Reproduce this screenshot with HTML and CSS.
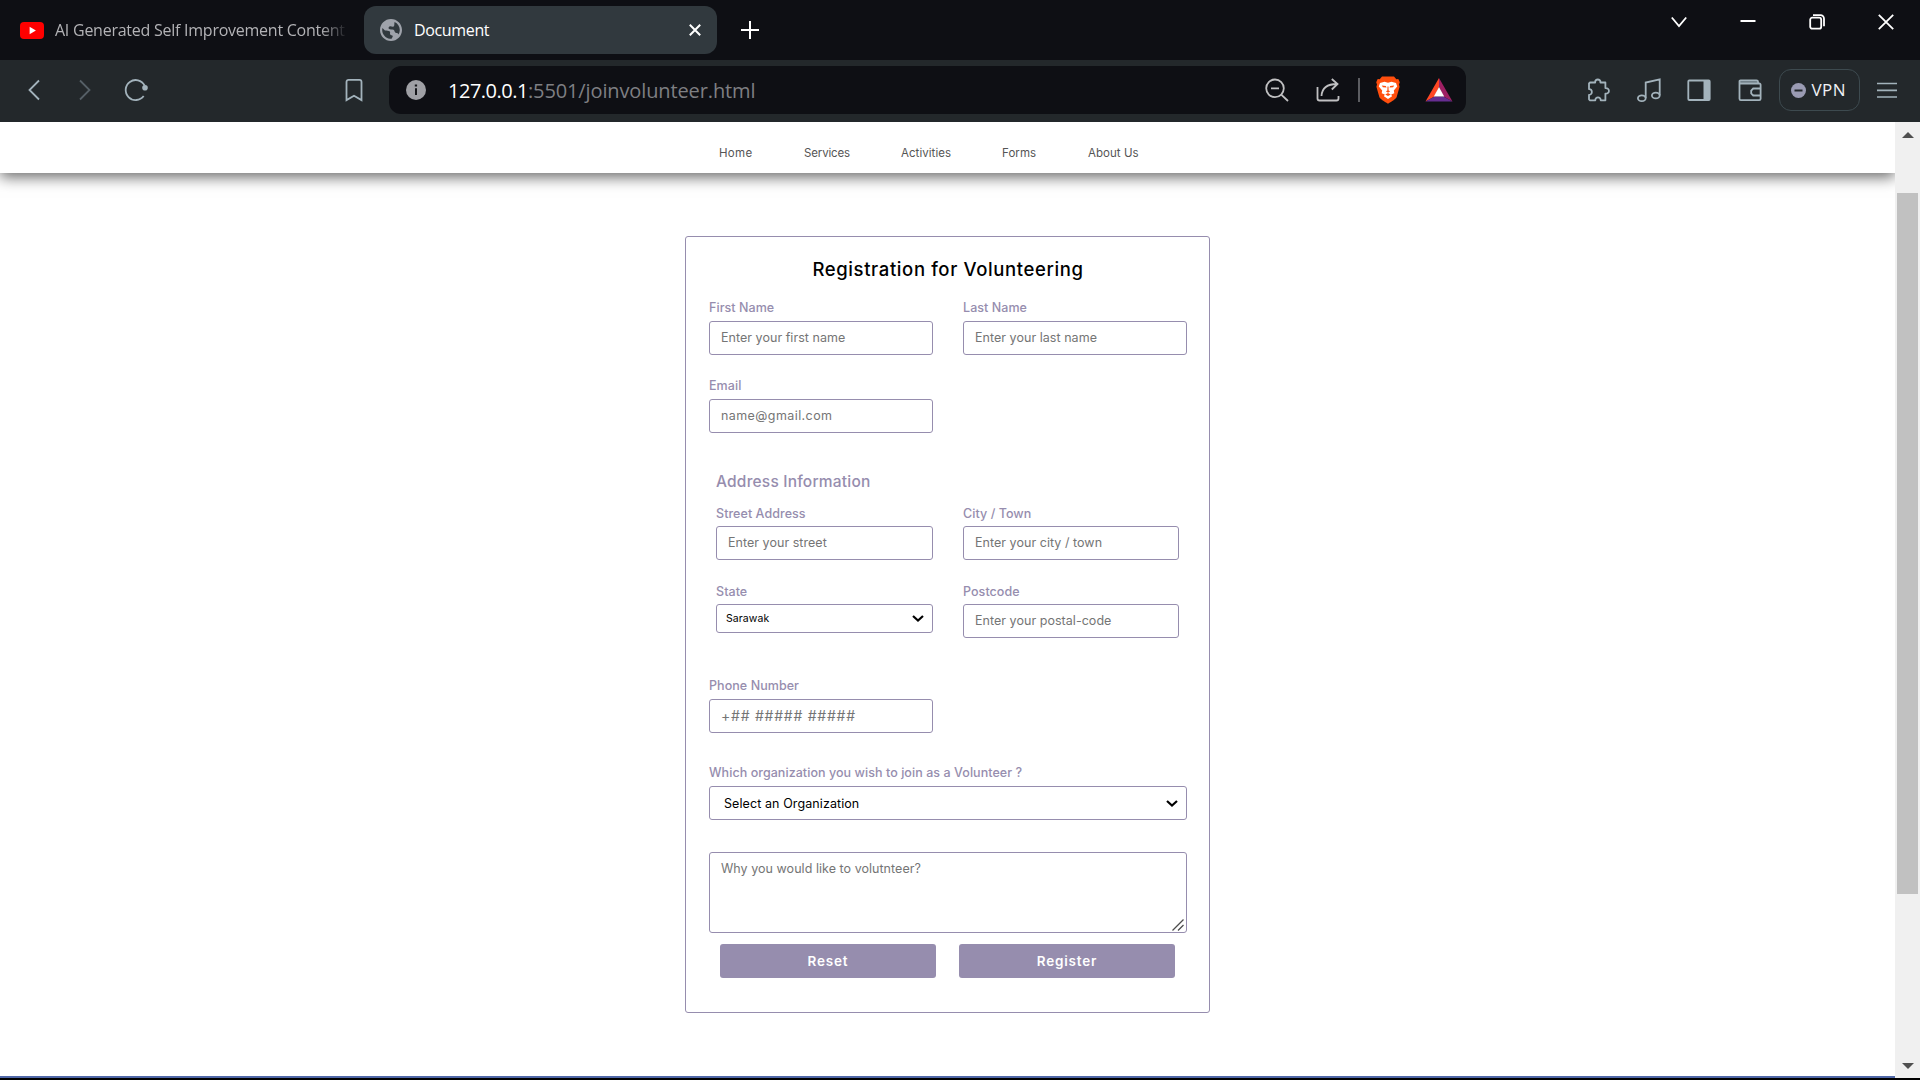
FILE: index.html
```html
<!DOCTYPE html>
<html lang="en">
<head>
<meta charset="utf-8">
<title>Document</title>
<link rel="stylesheet" href="styles.css">
</head>
<body>
<div class="tabbar">
  <div class="tab">
    <svg class="yt" width="24" height="17" viewBox="0 0 24 17"><rect width="24" height="17" rx="4" fill="#f00"/><path d="M9.6 4.8v7.4l6.3-3.7z" fill="#fff"/></svg>
    <span class="tab-title tab-title-fade">AI Generated Self Improvement Content</span>
  </div>
  <div class="tab tab-active">
    <svg class="globe" width="22" height="22" viewBox="2 2 20 20" fill="#9fa3ab"><path d="M12 2C6.480 2 2 6.480 2 12s4.480 10 10 10 10-4.480 10-10S17.520 2 12 2zm-1 17.930c-3.950-.490-7-3.850-7-7.930 0-.620.080-1.210.210-1.790L6.500 12.500c1.500.400 3.300-.200 4.500.900.700.800-.400 1.600.300 2.600.500.700 1.700.500 2.200 1.300.400.900-.500 1.600-.900 2.630zM18.900 16c-.400-.900-1.200-1.300-2.200-1.300-1.500-.100-1.200-2.100-2.400-2.900-1.300-.800-3.300.100-4.300-1-.700-.900.200-2 1.200-2.200 1.200-.200 2.100.900 3.200.200.900-.700.500-1.900.700-2.900l.100-1.200C18.100 6 20 8.800 20 12c0 1.500-.400 2.800-1.100 4z"/></svg>
    <span class="tab-title">Document</span>
    <svg class="tab-close" width="12" height="12" viewBox="0 0 12 12" fill="none" stroke="#fff" stroke-width="2"><path d="M.8.800l10.400 10.400M11.200.800.800 11.200"/></svg>
  </div>
  <svg class="newtab" width="18" height="18" viewBox="0 0 18 18" stroke="#fff" stroke-width="2"><path d="M9 0v18M0 9h18"/></svg>
  <div class="window-controls">
    <svg width="16" height="16" viewBox="0 0 16 16" fill="none" stroke="#fff" stroke-width="1.800"><path d="M.8 3.500 8 12l7.200-8.500"/></svg>
    <svg width="16" height="16" viewBox="0 0 16 16" stroke="#fff" stroke-width="2"><path d="M.5 7h15"/></svg>
    <svg width="16" height="16" viewBox="0 0 16 16" fill="none" stroke="#fff" stroke-width="1.800"><rect x="1.200" y="3.700" width="11" height="11" rx="2"/><path d="M4 1.200h7.500a3.500 3.500 0 0 1 3.500 3.500v7.600"/></svg>
    <svg width="16" height="16" viewBox="0 0 16 16" stroke="#fff" stroke-width="1.800"><path d="m.8.800 14.400 14.400M15.200.800.800 15.200"/></svg>
  </div>
</div>

<div class="toolbar">
  <div class="nav-icons">
    <svg class="ico" viewBox="0 0 24 24"><path d="M17 2.500 7.500 12l9.500 9.500" /></svg>
    <svg class="ico ico-dim" viewBox="0 0 24 24"><path d="m7 2.500 9.500 9.500L7 21.500"/></svg>
    <svg class="ico" viewBox="0 0 24 24"><path d="M19.700 18A10 10 0 1 1 20.600 7.500"/><circle cx="21" cy="9.700" r="2.800" fill="#a3b3bc" stroke="none"/></svg>
  </div>
  <svg class="ico ico-bookmark" viewBox="0 0 24 24"><path d="M6.500 1.900h11a2 2 0 0 1 2 2v18.200L12 17.800l-7.500 4.300V3.900a2 2 0 0 1 2-2z"/></svg>
  <div class="urlbar">
    <svg class="info" width="20" height="20" viewBox="0 0 20 20"><circle cx="10" cy="10" r="10" fill="#9fa0a5"/><path d="M8.500 8.300h2.500V15H9V8.300M8.800 4.600h2.300v2H8.800z" fill="#15161a"/></svg>
    <span class="url"><b class="host">127.0.0.1</b>:5501/joinvolunteer.html</span>
    <svg class="ico ico-gray ico-zoom" viewBox="0 0 24 24"><circle cx="10" cy="10.300" r="8.800"/><path d="m16.500 16.800 6.500 6.200M6 10.300h8"/></svg>
    <svg class="ico ico-gray" viewBox="0 0 24 24"><path d="M1.500 9v11.500a2 2 0 0 0 2 2h17a2 2 0 0 0 2-2V18M5.500 18C6 10 11 6 21 6M15.800 1 21.500 6l-5.700 5.500"/></svg>
    <span class="divider"></span>
    <svg class="brave" width="24" height="28" viewBox="0 0 24 28"><path d="M6 .5h12l2.300 2.700 2-.2 1.500 3.300-.8 2.200.6 2.300-3 10.500c-.500 1.500-4.600 4.200-8.600 6.400C8 25.500 3.900 22.800 3.400 21.300L.4 10.800 1 8.500.2 6.300 1.700 3l2 .2z" fill="#ff4e0d"/><path d="M4 7 8.500 5.800 12 6.700l3.500-.9L20 7l1.200 3.500-3.400 4 .5 2.700-3.100 1.300.9 1.700L12 23l-4.100-2.800.9-1.700-3.100-1.300.5-2.700-3.400-4z" fill="#fff"/><path d="m5.800 9.600 4 .5.700 1.500-3.600-.4zM18.200 9.600l-4 .5-.7 1.500 3.600-.4zM11.500 10.500h1l.1 4 1.600.8-2.200 1.400-2.200-1.400 1.600-.8zM9.200 18.400l2.800-1.300 2.800 1.300-2.800 1.700z" fill="#ff4e0d"/></svg>
    <svg class="bat" width="28" height="24" viewBox="0 0 28 24"><path d="M14 0 .5 23.500l9-5L14 9z" fill="#ff4724"/><path d="m14 0 13.500 23.500-9-5L14 9z" fill="#9e1f63"/><path d="M.5 23.500h27l-9-5h-9z" fill="#662d91"/><path d="m14 9 5.200 9.500H8.800z" fill="#fff"/></svg>
  </div>
  <div class="ext-icons">
    <svg class="ico" viewBox="0 0 24 24"><path d="M3 4.500h5.200c-.600-4 5.800-4 5.200 0h5v5.600c4.700-.400 4.700 6 0 5.600v6.600h-4.700c.2-4-5.600-4-5.400 0H3l-1-1v-4.500c3.700.300 3.900-6 0-5.700V5.500z" stroke-linejoin="round"/></svg>
    <svg class="ico" viewBox="0 0 24 24"><ellipse cx="4.800" cy="20.200" rx="3.900" ry="2.900"/><ellipse cx="18.800" cy="17.500" rx="3.900" ry="2.900"/><path d="M8.700 20V4.500l14-3.200v16"/></svg>
    <svg class="ico" viewBox="0 0 24 24"><rect x="1.300" y="2.500" width="21.400" height="19.500" rx="1"/><path d="M16.500 2.500H23V22h-6.500z" fill="#a3b3bc" stroke="none"/></svg>
    <svg class="ico" viewBox="0 0 24 24"><path d="M2 3h17v2.500H2z" fill="#65737b" stroke="none"/><path d="M1.500 5.500V3.300a1 1 0 0 1 1-1H18.500a1.500 1.500 0 0 1 1.500 1.500v1.700M1.500 5.500h19.800a1.300 1.300 0 0 1 1.300 1.300v14a1.300 1.300 0 0 1-1.300 1.300H2.800a1.300 1.300 0 0 1-1.300-1.300zM22.500 10.500h-7.300l-2 2v3l2 2h7.300"/></svg>
  </div>
  <div class="vpn"><svg width="15" height="15" viewBox="0 0 15 15"><circle cx="7.500" cy="7.500" r="7.500" fill="#9a9bb3"/><path d="M3.500 7.500h8" stroke="#22272b" stroke-width="2"/></svg><span class="vpn-label">VPN</span></div>
  <svg class="menu" width="20" height="16" viewBox="0 0 20 16" stroke="#a3b3bc" stroke-width="1.700"><path d="M0 1.500h20M0 8.300h20M0 15h20"/></svg>
</div>

<div class="viewport">
  <div class="page">
    <header class="site-header">
      <nav class="site-nav"><a class="n1">Home</a><a class="n2">Services</a><a>Activities</a><a>Forms</a><a>About Us</a></nav>
    </header>
    <form class="card">
      <h1 class="title">Registration for Volunteering</h1>
      <div class="grid">
        <div class="field"><label>First Name</label><input placeholder="Enter your first name"></div>
        <div class="field"><label>Last Name</label><input placeholder="Enter your last name"></div>
        <div class="field"><label>Email</label><input class="wide-text" placeholder="name@gmail.com"></div>
      </div>
      <section class="address">
        <h2 class="subtitle">Address Information</h2>
        <div class="grid">
          <div class="field"><label>Street Address</label><input placeholder="Enter your street"></div>
          <div class="field"><label>City / Town</label><input placeholder="Enter your city / town"></div>
          <div class="field"><label>State</label>
            <div class="select select-small"><span>Sarawak</span><svg class="chev" viewBox="0 0 12 7"><path d="m1 1 5 4.500L11 1"/></svg></div></div>
          <div class="field"><label>Postcode</label><input placeholder="Enter your postal-code"></div>
        </div>
      </section>
      <div class="grid">
        <div class="field"><label>Phone Number</label><input class="phone" placeholder="+## ##### #####"></div>
      </div>
      <div class="field org"><label>Which organization you wish to join as a Volunteer ?</label>
        <div class="select"><span>Select an Organization</span><svg class="chev" viewBox="0 0 12 7"><path d="m1 1 5 4.500L11 1"/></svg></div></div>
      <div class="reason">
        <span>Why you would like to volutnteer?</span>
        <svg class="grip" width="12" height="12" viewBox="0 0 12 12" stroke="#4d4d4d" stroke-width="1.300"><path d="M.5 11.500 11.500.5M6 11.500 11.500 6"/></svg>
      </div>
      <div class="actions"><button type="button">Reset</button><button type="button">Register</button></div>
    </form>
  </div>
  <div class="scrollbar">
    <svg width="12" height="6" viewBox="0 0 12 6"><path d="M6 0l6 6H0z" fill="#505050"/></svg>
    <div class="thumb"></div>
    <svg class="down" width="12" height="6" viewBox="0 0 12 6"><path d="M0 0h12L6 6z" fill="#505050"/></svg>
  </div>
</div>
</body>
</html>
```
FILE: styles.css
```css
* { box-sizing: border-box; }
body {
  margin: 0;
  width: 1920px;
  height: 1080px;
  overflow: hidden;
  background: #000;
  font-family: Inter, "Liberation Sans", sans-serif;
}
svg { display: block; flex: none; }

/* Tab strip */
.tabbar {
  display: flex;
  align-items: center;
  height: 60px;
  background: #0e0f14;
  font-family: "Open Sans", "Noto Sans", sans-serif;
}
.tab {
  display: flex;
  align-items: center;
  width: 364px;
  height: 48px;
  padding-left: 20px;
}
.tab-title {
  font-size: 16px;
  line-height: 24px;
  letter-spacing: -0.35px;
  color: #fff;
  white-space: nowrap;
}
.tab-title-fade {
  width: 291px;
  margin-left: 11px;
  overflow: hidden;
  letter-spacing: -0.25px;
  color: #b3b3b6;
  -webkit-mask-image: linear-gradient(90deg, #000 266px, transparent 293px);
  mask-image: linear-gradient(90deg, #000 266px, transparent 293px);
}
.tab-active {
  width: 353px;
  padding: 0 16px;
  border-radius: 12px;
  background: #31393e;
}
.globe { margin-right: 12px; }
.tab-close { margin-left: auto; }
.newtab { margin-left: 24px; }
.window-controls {
  display: flex;
  gap: 53px;
  align-self: flex-start;
  margin: 14px 26px 0 auto;
}

/* Address toolbar */
.toolbar {
  display: flex;
  align-items: center;
  height: 62px;
  padding: 0 23px 2px 22px;
  background: #23282b;
  font-family: "Open Sans", "Noto Sans", sans-serif;
}
.ico {
  width: 24px;
  height: 24px;
  fill: none;
  stroke: #a3b3bc;
  stroke-width: 1.8;
}
.ico-dim { stroke: #566067; }
.ico-gray { stroke: #c0c0c2; }
.nav-icons { display: flex; gap: 27px; }
.ico-bookmark { margin: 0 23px 0 194px; }
.urlbar {
  display: flex;
  align-items: center;
  width: 1077px;
  height: 48px;
  padding: 0 13px 0 17px;
  border-radius: 12px;
  background: #0e0f14;
}
.url {
  margin-left: 22px;
  padding-top: 1px;
  font-size: 20px;
  line-height: 28px;
  letter-spacing: -0.12px;
  color: #7e7f83;
}
.host { font-weight: 400; letter-spacing: -0.49px; color: #fff; }
.ico-zoom { margin: 0 27px 0 auto; }
.divider { width: 2px; height: 24px; margin: 0 16px 0 18px; background: #5c5d62; }
.bat { margin-left: 25px; }
.ext-icons { display: flex; gap: 26.2px; margin-left: 121px; }
.vpn {
  display: flex;
  align-items: center;
  gap: 6px;
  width: 81px;
  height: 42px;
  margin-left: 17px;
  padding-left: 11px;
  border: 1px solid #3d4a4f;
  border-radius: 12px;
}
.vpn-label { font-size: 17px; line-height: 24px; letter-spacing: 0.4px; color: #f0f1f5; }
.menu { margin-left: auto; }

/* Web page area */
.viewport { display: flex; height: 956px; }
.page {
  width: 1895px;
  height: 956px;
  overflow: hidden;
  border-bottom: 2px solid #5068a8;
  background: #fff;
}
.site-header {
  height: 51px;
  padding: 22px 0 0 719px;
  background: #fff;
  box-shadow: 0 4px 14px rgba(0, 0, 0, 0.6);
}
.site-nav {
  display: grid;
  grid-template-columns: 85px 97px 101px 86px auto;
  font-size: 11.5px;
  line-height: 18px;
  letter-spacing: 0.05px;
  color: #555;
}
.n1 { letter-spacing: 0.29px; }
.n2 { letter-spacing: -0.15px; }

.card {
  width: 525px;
  height: 777px;
  margin: 63px 0 0 685px;
  padding: 18px 22px 0 23px;
  border: 1px solid #968dae;
  border-radius: 3px;
}
.title {
  margin: 0 0 16px;
  font-size: 18.5px;
  font-weight: 450;
  line-height: 28px;
  letter-spacing: 0.62px;
  text-align: center;
  color: #000;
}
.grid { display: grid; grid-template-columns: 1fr 1fr; gap: 22px 30px; align-items: start; }
.field { display: flex; flex-direction: column; gap: 4px; }
.field label {
  font-size: 12.5px;
  font-weight: 500;
  line-height: 18px;
  letter-spacing: 0.06px;
  color: #968dae;
}
.field input, .select, .reason {
  width: 100%;
  height: 34px;
  padding: 0 11px 1px;
  border: 1px solid #968dae;
  border-radius: 3px;
  background: #fff;
  font: 400 12.5px Inter, "Liberation Sans", sans-serif;
  letter-spacing: 0.04px;
}
.field input::placeholder { color: #757575; }
.field .wide-text { letter-spacing: 0.42px; }
.field .phone { font-size: 14px; letter-spacing: 0.75px; }

.address { padding: 37px 8px 39px 7px; }
.subtitle {
  margin: 0 0 11px;
  font-size: 15.5px;
  font-weight: 500;
  line-height: 24px;
  letter-spacing: 0.2px;
  color: #968dae;
}
.address .grid { grid-template-columns: 217px 216px; row-gap: 23px; }
.address .field { gap: 3px; }

.select {
  display: flex;
  align-items: center;
  justify-content: space-between;
  padding: 0 8px 0 14px;
  letter-spacing: 0.09px;
  color: #000;
}
.select-small { height: 29px; padding: 0 8px 0 9px; font-size: 10.5px; }
.chev { width: 12px; height: 7px; fill: none; stroke: #000; stroke-width: 2.2; }

.org { margin-top: 31px; }
.reason {
  display: flex;
  justify-content: space-between;
  height: 81px;
  margin-top: 32px;
  padding: 7px 2px 1px 11px;
  line-height: 18px;
  color: #757575;
}
.grip { align-self: flex-end; }
.actions {
  display: grid;
  grid-template-columns: 216px 216px;
  gap: 23px;
  margin: 11px 0 0 11px;
}
.actions button {
  height: 34px;
  padding: 0 0 1px;
  border: 0;
  border-radius: 3px;
  background: #968dae;
  font: 600 13.5px Inter, "Liberation Sans", sans-serif;
  letter-spacing: 0.8px;
  color: #fff;
}

/* Scrollbar */
.scrollbar {
  display: flex;
  flex-direction: column;
  align-items: center;
  width: 25px;
  height: 956px;
  padding: 10px 0 9px;
  background: #f0f0f0;
}
.thumb { width: 21px; height: 701px; margin-top: 55px; background: #c1c1c1; }
.down { margin-top: auto; }
```
